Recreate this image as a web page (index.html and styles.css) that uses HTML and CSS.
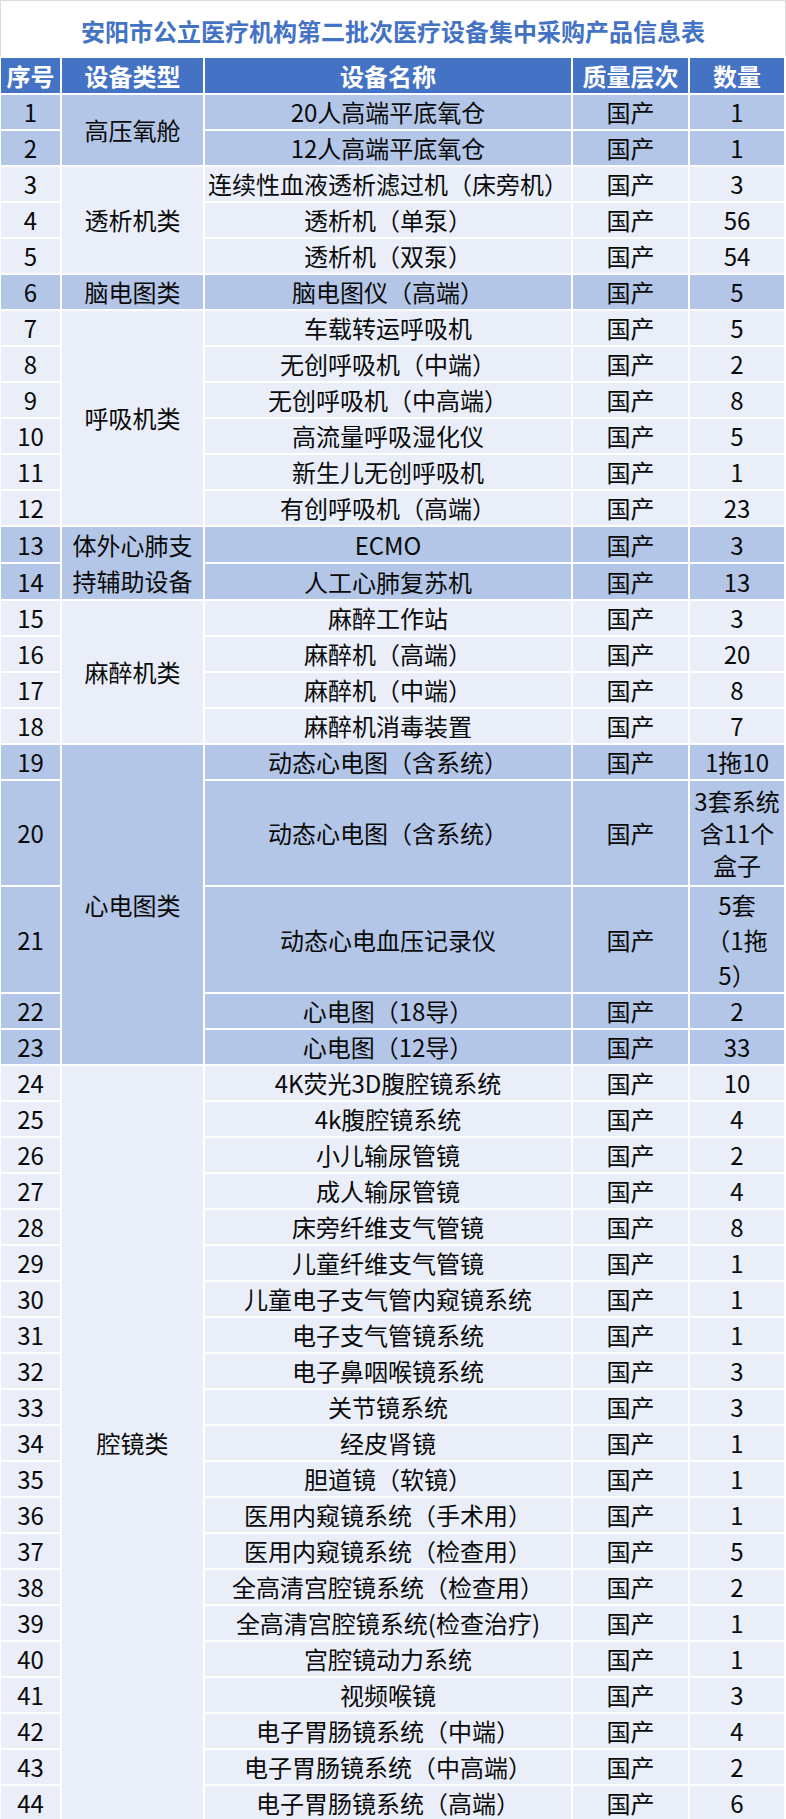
FILE: index.html
```html
<!DOCTYPE html>
<html lang="zh-CN">
<head>
<meta charset="utf-8">
<title>安阳市公立医疗机构第二批次医疗设备集中采购产品信息表</title>
<link rel="stylesheet" href="styles.css">
</head>
<body>
<div class="sheet">
  <div class="title">安阳市公立医疗机构第二批次医疗设备集中采购产品信息表</div>
  <table class="grid">
    <colgroup>
      <col class="c-no"><col class="c-type"><col class="c-name"><col class="c-level"><col class="c-qty">
    </colgroup>
    <thead>
      <tr class="head"><th>序号</th><th>设备类型</th><th>设备名称</th><th>质量层次</th><th>数量</th></tr>
    </thead>
    <tbody>
      <tr class="dark"><td>1</td><td rowspan="2">高压氧舱</td><td>20人高端平底氧仓</td><td>国产</td><td>1</td></tr>
      <tr class="dark"><td>2</td><td>12人高端平底氧仓</td><td>国产</td><td>1</td></tr>

      <tr class="light"><td>3</td><td rowspan="3">透析机类</td><td>连续性血液透析滤过机（床旁机）</td><td>国产</td><td>3</td></tr>
      <tr class="light"><td>4</td><td>透析机（单泵）</td><td>国产</td><td>56</td></tr>
      <tr class="light"><td>5</td><td>透析机（双泵）</td><td>国产</td><td>54</td></tr>

      <tr class="dark"><td>6</td><td>脑电图类</td><td>脑电图仪（高端）</td><td>国产</td><td>5</td></tr>

      <tr class="light"><td>7</td><td rowspan="6">呼吸机类</td><td>车载转运呼吸机</td><td>国产</td><td>5</td></tr>
      <tr class="light"><td>8</td><td>无创呼吸机（中端）</td><td>国产</td><td>2</td></tr>
      <tr class="light"><td>9</td><td>无创呼吸机（中高端）</td><td>国产</td><td>8</td></tr>
      <tr class="light"><td>10</td><td>高流量呼吸湿化仪</td><td>国产</td><td>5</td></tr>
      <tr class="light"><td>11</td><td>新生儿无创呼吸机</td><td>国产</td><td>1</td></tr>
      <tr class="light"><td>12</td><td>有创呼吸机（高端）</td><td>国产</td><td>23</td></tr>

      <tr class="dark"><td>13</td><td rowspan="2" class="two-line">体外心肺支<br>持辅助设备</td><td>ECMO</td><td>国产</td><td>3</td></tr>
      <tr class="dark"><td>14</td><td>人工心肺复苏机</td><td>国产</td><td>13</td></tr>

      <tr class="light"><td>15</td><td rowspan="4">麻醉机类</td><td>麻醉工作站</td><td>国产</td><td>3</td></tr>
      <tr class="light"><td>16</td><td>麻醉机（高端）</td><td>国产</td><td>20</td></tr>
      <tr class="light"><td>17</td><td>麻醉机（中端）</td><td>国产</td><td>8</td></tr>
      <tr class="light"><td>18</td><td>麻醉机消毒装置</td><td>国产</td><td>7</td></tr>

      <tr class="dark"><td>19</td><td rowspan="5">心电图类</td><td>动态心电图（含系统）</td><td>国产</td><td>1拖10</td></tr>
      <tr class="dark tall"><td>20</td><td>动态心电图（含系统）</td><td>国产</td><td class="wrap">3套系统<br>含11个<br>盒子</td></tr>
      <tr class="dark tall"><td>21</td><td>动态心电血压记录仪</td><td>国产</td><td class="wrap wide">5套<br>（1拖<br>5）</td></tr>
      <tr class="dark"><td>22</td><td>心电图（18导）</td><td>国产</td><td>2</td></tr>
      <tr class="dark"><td>23</td><td>心电图（12导）</td><td>国产</td><td>33</td></tr>

      <tr class="light"><td>24</td><td rowspan="21">腔镜类</td><td>4K荧光3D腹腔镜系统</td><td>国产</td><td>10</td></tr>
      <tr class="light"><td>25</td><td>4k腹腔镜系统</td><td>国产</td><td>4</td></tr>
      <tr class="light"><td>26</td><td>小儿输尿管镜</td><td>国产</td><td>2</td></tr>
      <tr class="light"><td>27</td><td>成人输尿管镜</td><td>国产</td><td>4</td></tr>
      <tr class="light"><td>28</td><td>床旁纤维支气管镜</td><td>国产</td><td>8</td></tr>
      <tr class="light"><td>29</td><td>儿童纤维支气管镜</td><td>国产</td><td>1</td></tr>
      <tr class="light"><td>30</td><td>儿童电子支气管内窥镜系统</td><td>国产</td><td>1</td></tr>
      <tr class="light"><td>31</td><td>电子支气管镜系统</td><td>国产</td><td>1</td></tr>
      <tr class="light"><td>32</td><td>电子鼻咽喉镜系统</td><td>国产</td><td>3</td></tr>
      <tr class="light"><td>33</td><td>关节镜系统</td><td>国产</td><td>3</td></tr>
      <tr class="light"><td>34</td><td>经皮肾镜</td><td>国产</td><td>1</td></tr>
      <tr class="light"><td>35</td><td>胆道镜（软镜）</td><td>国产</td><td>1</td></tr>
      <tr class="light"><td>36</td><td>医用内窥镜系统（手术用）</td><td>国产</td><td>1</td></tr>
      <tr class="light"><td>37</td><td>医用内窥镜系统（检查用）</td><td>国产</td><td>5</td></tr>
      <tr class="light"><td>38</td><td>全高清宫腔镜系统（检查用）</td><td>国产</td><td>2</td></tr>
      <tr class="light"><td>39</td><td>全高清宫腔镜系统(检查治疗)</td><td>国产</td><td>1</td></tr>
      <tr class="light"><td>40</td><td>宫腔镜动力系统</td><td>国产</td><td>1</td></tr>
      <tr class="light"><td>41</td><td>视频喉镜</td><td>国产</td><td>3</td></tr>
      <tr class="light"><td>42</td><td>电子胃肠镜系统（中端）</td><td>国产</td><td>4</td></tr>
      <tr class="light"><td>43</td><td>电子胃肠镜系统（中高端）</td><td>国产</td><td>2</td></tr>
      <tr class="light"><td>44</td><td>电子胃肠镜系统（高端）</td><td>国产</td><td>6</td></tr>
    </tbody>
  </table>
</div>
</body>
</html>
```
FILE: styles.css
```css
html, body {
  margin: 0;
  padding: 0;
  background: #ffffff;
}

body {
  font-family: "Noto Sans CJK SC", "Noto Sans", sans-serif;
  color: #0a0a0a;
}

.sheet {
  width: 786px;
  overflow: hidden;
}

.title {
  box-sizing: border-box;
  height: 56px;
  padding-top: 4px;
  border: 1px solid #dcdcdc;
  border-bottom: none;
  display: flex;
  align-items: center;
  justify-content: center;
  color: #4472c4;
  font-size: 24px;
  font-weight: bold;
  letter-spacing: 0;
}

.grid {
  border-collapse: separate;
  border-spacing: 2px;
  margin-left: -1px;
  margin-top: 0;
  table-layout: fixed;
  width: 787px;
  background: #ffffff;
}

.c-no { width: 59px; }
.c-type { width: 141px; }
.c-name { width: 366px; }
.c-level { width: 115px; }
.c-qty { width: 94px; }

.grid th,
.grid td {
  padding: 0;
  text-align: center;
  vertical-align: middle;
  font-size: 24px;
  line-height: 34px;
  height: 34px;
  white-space: nowrap;
}

.head th {
  height: 35px;
  line-height: 35px;
  background: #4472c4;
  color: #ffffff;
  font-weight: bold;
}

.dark td {
  background: #b4c6e7;
}

.light td {
  background: #e9eef8;
}

.tall td {
  height: 104px;
}

.grid td.wrap {
  line-height: 32px;
}

.grid td.wrap.wide {
  line-height: 35px;
}

.grid td.two-line {
  line-height: 36px;
}
```
